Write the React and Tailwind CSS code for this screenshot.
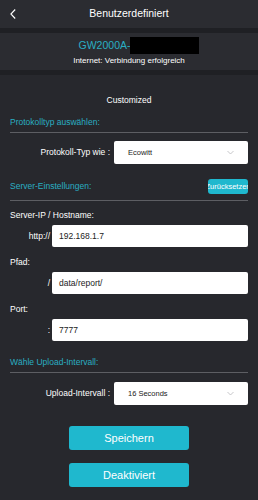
const font = { fontFamily: '"Liberation Sans", Arial, sans-serif' }

function Chevron() {
  return (
    <svg className="w-[7px] h-[5px]" viewBox="0 0 7 5" fill="none" stroke="#b9b9bd" strokeWidth="0.8">
      <path d="M0.5 1L3.5 4L6.5 1" />
    </svg>
  )
}

function SectionTitle({ children, right }) {
  return (
    <div className="flex items-center justify-between h-[10px]">
      <span className="text-[8.5px] leading-[10px] text-[#2aaec3]">{children}</span>
      {right}
    </div>
  )
}

function SelectRow({ label, value }) {
  return (
    <div className="flex items-center">
      <div className="w-[104px] pr-[4px] text-right text-[8.5px] text-white">{label}</div>
      <div className="flex-1 h-[23px] bg-white rounded-[2px] flex items-center justify-between pl-[14px] pr-[14px]">
        <span className="text-[7.5px] text-[#222]">{value}</span>
        <Chevron />
      </div>
    </div>
  )
}

function InputRow({ prefix, value }) {
  return (
    <div className="flex items-center">
      <div className="w-[40px] text-right text-[8.5px] text-white">{prefix}</div>
      <div className="ml-[2px] flex-1 h-[22px] bg-white rounded-[2px] flex items-center pl-[7px]">
        <span className="text-[8.5px] text-[#222]">{value}</span>
      </div>
    </div>
  )
}

export default function App() {
  return (
    <div className="w-[258px] h-[500px] bg-[#27282d] text-white overflow-hidden" style={font}>
      <header className="h-[28px] grid grid-cols-[40px_1fr_40px] items-center bg-[#2b2c31]">
        <div className="pl-[10px] flex items-center">
          <svg className="w-[6px] h-[10px]" viewBox="0 0 6 10" fill="none" stroke="#ffffff" strokeWidth="1.1">
            <path d="M5.2 0.5L0.9 5L5.2 9.5" />
          </svg>
        </div>
        <h1 className="text-center text-[10.5px] text-white">Benutzerdefiniert</h1>
        <div />
      </header>
      <div className="h-[5px] bg-[#1f2024]" />
      <div className="h-[37px] bg-[#2b2c31] flex flex-col items-center pt-[4px]">
        <div className="flex items-center h-[17px] pl-[20px]">
          <span className="text-[10.5px] text-[#2aaec3]">GW2000A-</span>
          <span className="w-[69px] h-[17px] bg-black" />
        </div>
        <div className="mt-[2px] text-[8px] leading-[10px] text-white">Internet: Verbindung erfolgreich</div>
      </div>
      <div className="h-[5px] bg-[#1f2024]" />

      <main className="px-[10px]">
        <div className="mt-[20px] h-[10px] text-center text-[8.5px] leading-[10px]">Customized</div>

        <div className="mt-[12px]">
          <SectionTitle>Protokolltyp auswählen:</SectionTitle>
        </div>
        <div className="mt-[5px] h-px bg-[#5d5e63]" />
        <div className="mt-[8px]">
          <SelectRow label="Protokoll-Typ wie :" value="Ecowitt" />
        </div>

        <div className="mt-[15px] flex items-center justify-between h-[15px]">
          <span className="text-[8.5px] text-[#2aaec3]">Server-Einstellungen:</span>
          <button className="w-[40px] h-[15px] rounded-[3px] bg-[#1fb8ce] flex items-center justify-center overflow-hidden whitespace-nowrap text-[7.5px] text-white">
            Zurücksetzen
          </button>
        </div>
        <div className="mt-[6px] h-px bg-[#5d5e63]" />

        <div className="mt-[9px] h-[10px] text-[8.5px] leading-[10px]">Server-IP / Hostname:</div>
        <div className="mt-[5px]">
          <InputRow prefix="http://" value="192.168.1.7" />
        </div>

        <div className="mt-[10px] h-[10px] text-[8.5px] leading-[10px]">Pfad:</div>
        <div className="mt-[5px]">
          <InputRow prefix="/" value="data/report/" />
        </div>

        <div className="mt-[10px] h-[10px] text-[8.5px] leading-[10px]">Port:</div>
        <div className="mt-[5px]">
          <InputRow prefix=":" value="7777" />
        </div>

        <div className="mt-[16px]">
          <SectionTitle>Wähle Upload-Intervall:</SectionTitle>
        </div>
        <div className="mt-[5px] h-px bg-[#5d5e63]" />
        <div className="mt-[9px]">
          <SelectRow label="Upload-Intervall :" value="16 Seconds" />
        </div>

        <div className="mt-[21px] flex flex-col items-center gap-[13px]">
          <button className="w-[120px] h-[24px] rounded-[3px] bg-[#1fb8ce] text-[11px] text-white">Speichern</button>
          <button className="w-[120px] h-[24px] rounded-[3px] bg-[#1fb8ce] text-[11px] text-white">Deaktiviert</button>
        </div>
      </main>
    </div>
  )
}
